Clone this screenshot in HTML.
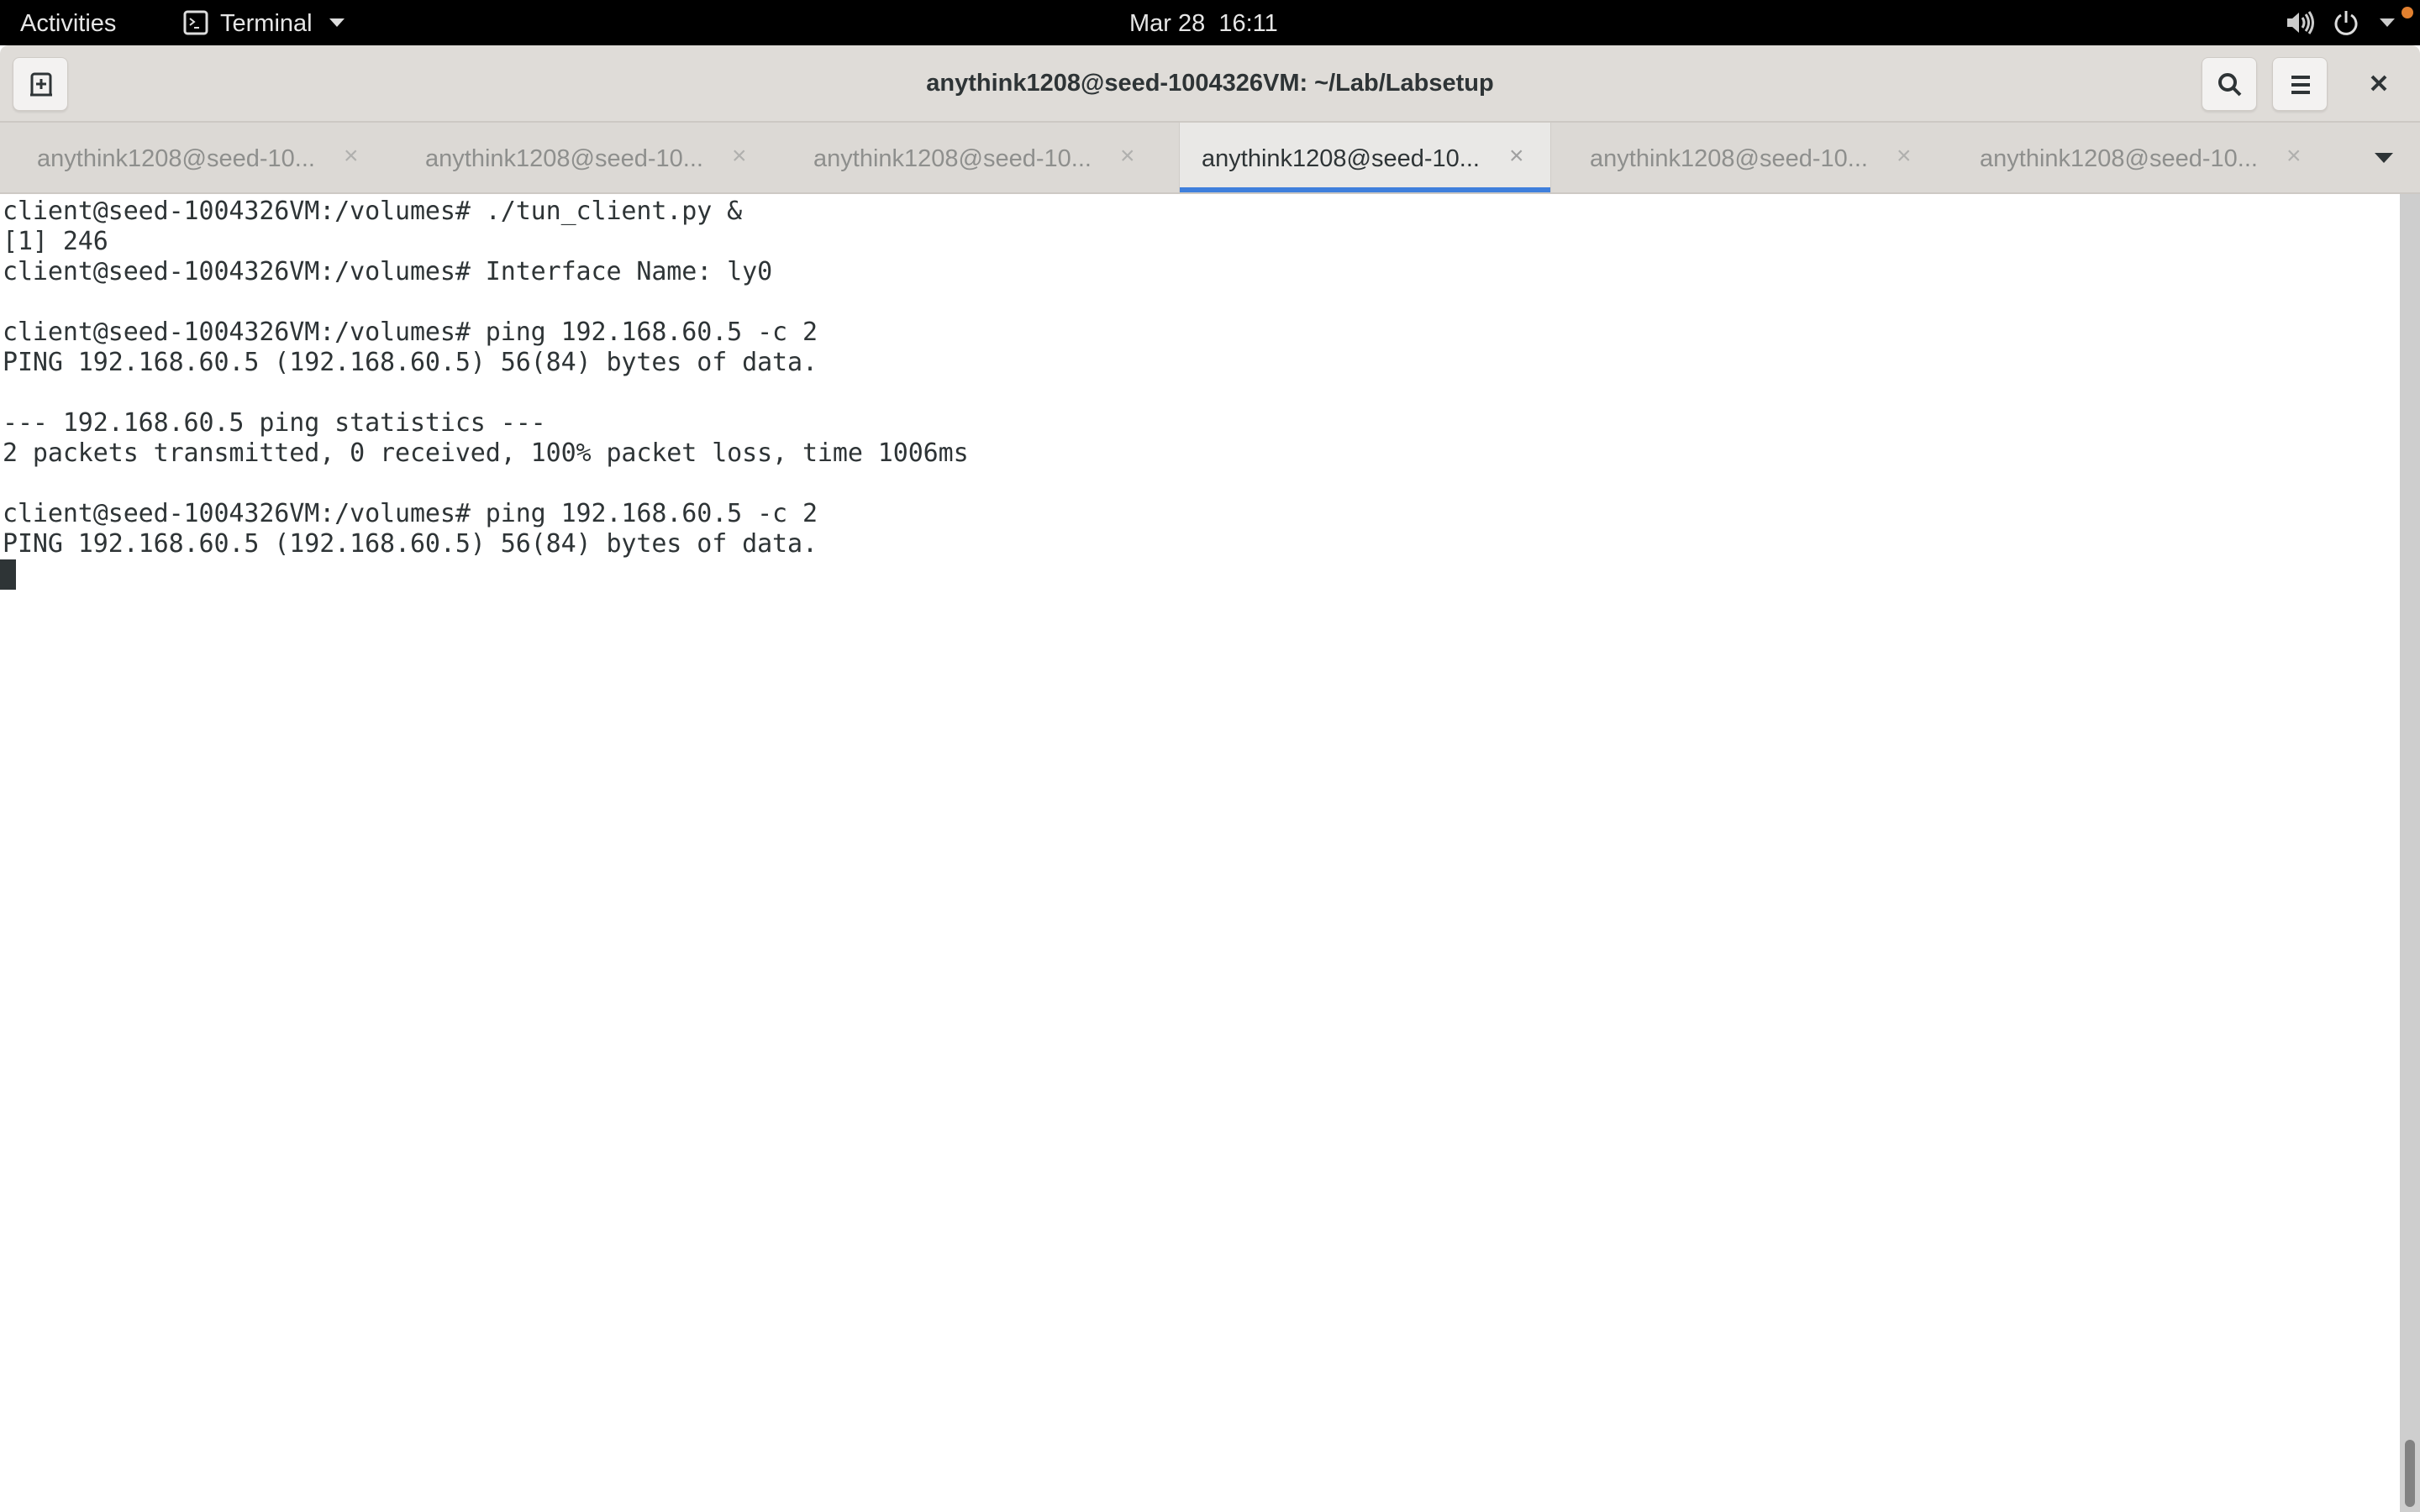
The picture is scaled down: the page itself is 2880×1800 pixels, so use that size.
<!DOCTYPE html>
<html><head><meta charset="utf-8"><style>
*{margin:0;padding:0;box-sizing:border-box}
body{width:2880px;height:1800px;overflow:hidden;background:#fff;font-family:"Liberation Sans","DejaVu Sans",sans-serif;position:relative}
.top{position:absolute;left:0;top:0;width:2880px;height:54px;background:#000;color:#e6e6e6;font-size:29px}
.top span{position:absolute;top:12px}
.hdr{position:absolute;left:0;top:54px;width:2880px;height:92px;background:#dfdcd8;border-bottom:2px solid #cdc9c4;border-radius:10px 10px 0 0}
.btn{position:absolute;top:14px;width:66px;height:64px;background:#f3f2f1;border:1px solid #cfcbc6;border-radius:8px;box-shadow:0 2px 2px rgba(0,0,0,.08)}
.title{position:absolute;top:29px;left:0;width:2880px;text-align:center;font-size:29px;font-weight:bold;color:#2e3436}
.tabs{position:absolute;left:0;top:146px;width:2880px;height:85px;background:#dcd9d5;border-bottom:2px solid #cdc9c4}
.tab{position:absolute;top:0;height:83px;font-size:29px;color:#8e8f8d}
.tab .t{position:absolute;top:27px}
.tab .x{position:absolute;top:23px;font-size:30px;color:#b0b0ae}
.term{position:absolute;left:3px;top:234px;font-family:"DejaVu Sans Mono","Liberation Mono",monospace;font-size:30px;line-height:36px;color:#2e3436;white-space:pre;letter-spacing:-0.1px}
</style></head><body>
<div class="top">
<span style="left:24px">Activities</span>
<svg style="position:absolute;left:218px;top:12px" width="30" height="30" viewBox="0 0 30 30"><rect x="2" y="2" width="26" height="26" rx="3" fill="none" stroke="#ddd" stroke-width="3"/><path d="M8 10l5 4-5 4M13 21h6" stroke="#ddd" stroke-width="2" fill="none"/></svg>
<span style="left:262px">Terminal</span>
<svg style="position:absolute;left:392px;top:22px" width="18" height="12"><path d="M0 0h18L9 10z" fill="#ddd"/></svg>
<span style="left:1344px">Mar 28&nbsp; 16:11</span>
<svg style="position:absolute;left:2720px;top:12px" width="34" height="30" viewBox="0 0 34 30"><path d="M2 10h6l8-7v24l-8-7H2z" fill="#ccc"/><path d="M20 9q4 6 0 12M24 5q7 10 0 20M28 2q9 13 0 26" stroke="#ccc" stroke-width="3" fill="none"/></svg>
<svg style="position:absolute;left:2776px;top:11px" width="32" height="32" viewBox="0 0 32 32"><path d="M10 7a12 12 0 1 0 12 0" stroke="#ddd" stroke-width="3" fill="none"/><path d="M16 2v14" stroke="#ddd" stroke-width="3"/></svg>
<svg style="position:absolute;left:2832px;top:22px" width="18" height="12"><path d="M0 0h18L9 10z" fill="#ccc"/></svg>
<div style="position:absolute;left:2858px;top:8px;width:14px;height:14px;border-radius:7px;background:#e2802f"></div>
</div>
<div class="hdr">
<div class="btn" style="left:15px"><svg style="position:absolute;left:17px;top:16px" width="32" height="32" viewBox="0 0 32 32"><path d="M5 28V6a3 3 0 0 1 3-3h16a3 3 0 0 1 3 3v22" fill="none" stroke="#2e3436" stroke-width="3"/><path d="M3 28h26" stroke="#2e3436" stroke-width="3"/><path d="M16 9v12M10 15h12" stroke="#2e3436" stroke-width="3"/></svg></div>
<div class="title">anythink1208@seed-1004326VM: ~/Lab/Labsetup</div>
<div class="btn" style="left:2620px"><svg style="position:absolute;left:17px;top:16px" width="32" height="32" viewBox="0 0 32 32"><circle cx="13" cy="13" r="9" fill="none" stroke="#2e3436" stroke-width="4"/><path d="M19 19l9 9" stroke="#2e3436" stroke-width="4"/></svg></div>
<div class="btn" style="left:2704px"><svg style="position:absolute;left:17px;top:16px" width="32" height="32" viewBox="0 0 32 32"><path d="M5 7h22M5 16h22M5 25h22" stroke="#2e3436" stroke-width="4"/></svg></div>
<svg style="position:absolute;left:2820px;top:34px" width="22" height="22" viewBox="0 0 22 22"><path d="M3 3l16 16M19 3L3 19" stroke="#2e3436" stroke-width="4"/></svg>
</div>
<div class="tabs">
<div class="tab" style="left:0;width:462px"><span class="t" style="left:44px">anythink1208@seed-10...</span><span class="x" style="left:409px">×</span></div>
<div class="tab" style="left:462px;width:462px"><span class="t" style="left:44px">anythink1208@seed-10...</span><span class="x" style="left:409px">×</span></div>
<div class="tab" style="left:924px;width:462px"><span class="t" style="left:44px">anythink1208@seed-10...</span><span class="x" style="left:409px">×</span></div>
<div class="tab" style="left:1403px;width:443px;background:#e9e8e6;border-left:1px solid #d0ccc7;border-right:1px solid #d0ccc7;color:#2e3436"><span class="t" style="left:26px">anythink1208@seed-10...</span><span class="x" style="left:392px;color:#a0a0a0">×</span><div style="position:absolute;left:0;bottom:0;width:100%;height:6px;background:#3f7fdc"></div></div>
<div class="tab" style="left:1848px;width:462px"><span class="t" style="left:44px">anythink1208@seed-10...</span><span class="x" style="left:409px">×</span></div>
<div class="tab" style="left:2310px;width:462px"><span class="t" style="left:46px">anythink1208@seed-10...</span><span class="x" style="left:411px">×</span></div>
<svg style="position:absolute;left:2826px;top:36px" width="22" height="14"><path d="M0 0h22L11 12z" fill="#2e3436"/></svg>
</div>
<div class="term">client@seed-1004326VM:/volumes# ./tun_client.py &amp;
[1] 246
client@seed-1004326VM:/volumes# Interface Name: ly0

client@seed-1004326VM:/volumes# ping 192.168.60.5 -c 2
PING 192.168.60.5 (192.168.60.5) 56(84) bytes of data.

--- 192.168.60.5 ping statistics ---
2 packets transmitted, 0 received, 100% packet loss, time 1006ms

client@seed-1004326VM:/volumes# ping 192.168.60.5 -c 2
PING 192.168.60.5 (192.168.60.5) 56(84) bytes of data.
</div>
<div style="position:absolute;left:0;top:666px;width:19px;height:36px;background:#2e3436"></div>
<div style="position:absolute;left:2856px;top:231px;width:24px;height:1569px;background:#cecece"></div>
<div style="position:absolute;left:2862px;top:1714px;width:12px;height:80px;border-radius:6px;background:#828282"></div>
</body></html>
